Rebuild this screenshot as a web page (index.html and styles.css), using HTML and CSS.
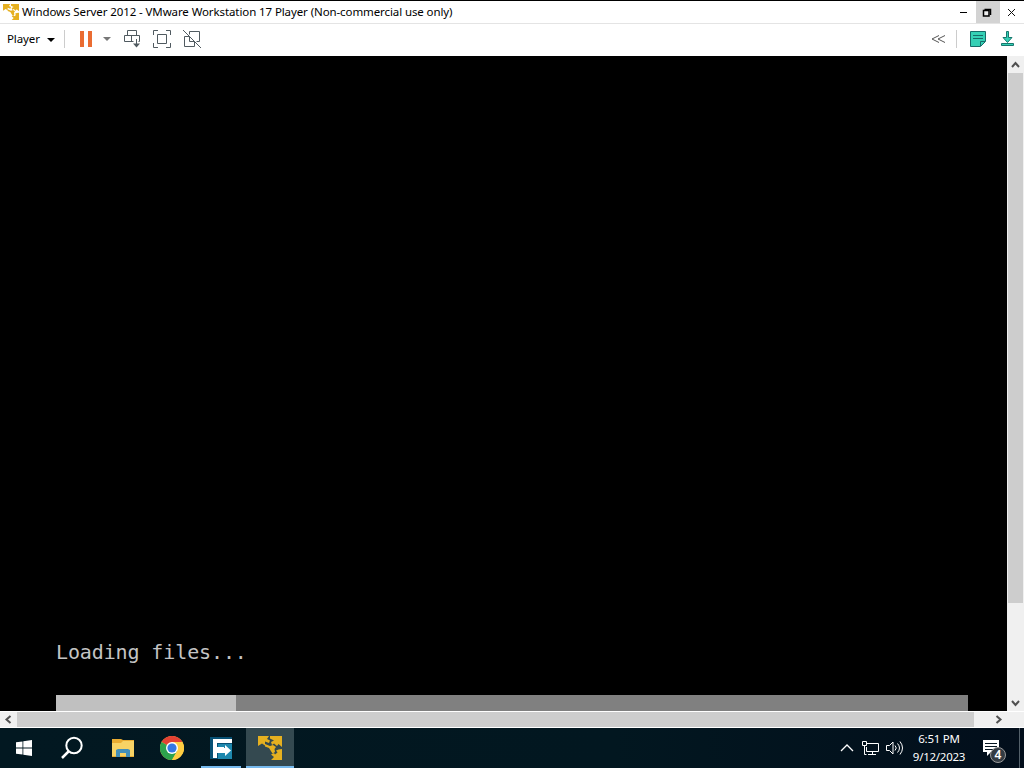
FILE: index.html
```
<!DOCTYPE html>
<html lang="en">

<head>
    <meta charset="UTF-8">
    <title>Windows Server 2012 - VMware Workstation 17 Player</title>
    <link rel="stylesheet" href="styles.css">
</head>

<body>
    <svg class="defs" width="0" height="0">
        <symbol id="vmware" viewBox="0 0 24 24">
            <path d="M0 0h11L9 3l3 1.500-1 2.500-4-1.500v4L4 7.500 0 10z" />
            <path d="M12 0h12v11l-3.500-3-1.500 2-3-2.500-2 1.500-1-3 3-1.500-4-2z" />
            <path d="M24 13v11H13l3-3-3-2.500 3-1.500 1 1.500 2.500-2-1.500-2 2.500-1z" />
            <path d="M7 8l5 2 3-1 3 2-1.500 2 .500 3-2.500 1.500-3.500-5.500-4-1.500z" />
        </symbol>
    </svg>

    <header class="title-bar">
        <svg class="app-icon" width="16" height="16"><use href="#vmware" /></svg>
        <span class="title">Windows Server 2012 - VMware Workstation 17 Player (Non-commercial use only)</span>
        <div class="window-buttons">
            <button><svg width="24" height="22"><path d="M8 11.5h7" stroke="#000" /></svg></button>
            <button class="restore"><svg width="24" height="22" fill="none" stroke="#000"><path d="M8.500 8.500h6v5.500" stroke-width="1.500" /><path d="M7.500 9.500h5.500v5.500h-5.500z" stroke-width="1.500" fill="#eee" /></svg></button>
            <button><svg width="24" height="22"><path d="M8 8l7 7M15 8l-7 7" stroke="#111" /></svg></button>
        </div>
    </header>

    <nav class="toolbar">
        <span class="player">Player</span>
        <i class="caret"></i>
        <i class="divider"></i>
        <div class="pause"></div>
        <i class="caret light"></i>
        <svg class="tool send" width="18" height="20" fill="none" stroke="#505a60">
            <path d="M3.500 6.500v-5h9v5M9.500 12.500h-9v-6h15v6h-1M7.500 6.500v6M12.500 10v7" />
            <path d="M9 14.500h7l-3.500 4z" fill="#505a60" stroke="none" />
        </svg>
        <svg class="tool full" width="18" height="18" fill="none" stroke="#505a60">
            <path d="M.500 5V.500H5M13 .500h4.500V5M17.500 13v4.500H13M5 17.500H.500V13M4.500 4.500h9v9h-9z" />
        </svg>
        <svg class="tool unity" width="18" height="18" fill="none" stroke="#505a60">
            <path d="M6.500 4.500v-3h10v10h-3M6.500 6.500h-5v10h10v-5M6.500 6.500v5h5M0 0l18 18" />
        </svg>
        <div class="tools-right">
            <svg class="collapse" width="14" height="8" fill="none" stroke="#555"><path d="M8 .500L1 4l7 3.500M14 .500L7 4l7 3.500" /></svg>
            <i class="divider"></i>
            <svg class="note" width="16" height="16" stroke="#176b68">
                <path d="M.500 .500h15v10l-5 5H.500z" fill="#35d0b5" />
                <path d="M3 4.500h10M3 7.500h10M10.500 15v-4.500H15" fill="none" />
            </svg>
            <svg class="download" width="14" height="16" stroke="#17776e" fill="#35d0b5">
                <path d="M5.500 .500h2v6h3.500l-4.500 5-4.500-5h3.500zM.500 12.500h12v2H.500z" />
            </svg>
        </div>
    </nav>

    <main class="viewport">
        <div class="screen">
            <p class="loading">Loading files...</p>
            <div class="progress"><div class="progress-done"></div></div>
        </div>
        <div class="scroll-y">
            <svg width="17" height="17"><path d="M5 11l3.500-4L12 11" /></svg>
            <div class="thumb"></div>
            <svg class="end" width="17" height="17"><path d="M5 7l3.500 4L12 7" /></svg>
        </div>
    </main>
    <div class="scroll-x">
        <svg width="17" height="17"><path d="M10.500 4l-4 3.500 4 3.500" /></svg>
        <div class="thumb"></div>
        <svg class="end" width="17" height="17"><path d="M6.500 4l4 3.500-4 3.500" /></svg>
    </div>

    <footer class="taskbar">
        <div class="task start">
            <svg width="16" height="16" fill="#fff"><path d="M0 2.300l6.500-.9v6.200H0zM7.300 1.300L16 0v7.600H7.300zM0 8.400h6.500v6.200L0 13.700zM7.300 8.400H16V16l-8.700-1.300z" /></svg>
        </div>
        <div class="task search">
            <svg width="24" height="24" fill="none" stroke="#fff" stroke-width="2"><circle cx="14" cy="9.500" r="7.700" /><path d="M8.500 15.500L2 22" stroke-width="2.500" /></svg>
        </div>
        <div class="task explorer">
            <svg width="22" height="20">
                <path d="M0 1h9l2 1h11v17H0z" fill="#e9ac32" />
                <path d="M0 5h9l2-2h11v15H0z" fill="#f8d365" />
                <path d="M4 19v-7l2-1h10l2 1v7h-4v-4H8v4z" fill="#438fb9" />
            </svg>
        </div>
        <div class="task chrome">
            <svg width="24" height="24">
                <circle cx="12" cy="12" r="12" fill="#ffcd42" />
                <path d="M12 12L1.600 6A12 12 0 0 1 22.400 6H12z" fill="#e34133" />
                <path d="M12 12L1.600 6A12 12 0 0 0 12 24l5.200-9z" fill="#2da34d" />
                <path d="M12 6h10.400A12 12 0 0 1 12 24l5.200-9z" fill="#ffcd42" />
                <circle cx="12" cy="12" r="6" fill="#fff" />
                <circle cx="12" cy="12" r="4.600" fill="#3478e5" />
            </svg>
        </div>
        <div class="task transfer">
            <svg width="24" height="24">
                <path d="M1 1h22v22H1z" fill="#075074" />
                <path d="M9 8h14v15H9z" fill="#1d87ad" />
                <path d="M4 3h19v4H8v4h7v3H8v8H4z" fill="#fff" />
                <path d="M8 12h8V9l6 5.500-6 5.500v-3H8z" fill="#fff" />
            </svg>
        </div>
        <div class="task active">
            <svg width="24" height="24"><use href="#vmware" /></svg>
        </div>
        <div class="tray">
            <svg class="chevron" width="14" height="8" fill="none" stroke="#fff" stroke-width="1.300"><path d="M1 7l6-6 6 6" /></svg>
            <svg class="network" width="17" height="15" fill="none" stroke="#fff"><path d="M5 2.500h11.500v8H4.500V6M10.500 10.500v3M6 13.500h8M.500 .500h4v4h-4zM2.500 4.500v9h2" /></svg>
            <svg class="volume" width="18" height="14" fill="none" stroke="#fff"><path d="M.500 4.500h3L7 1v12L3.500 9.500h-3zM9 4.500q2.500 2.500 0 5M11.500 2.500q4 4.500 0 9M14 .500q5 6.500 0 13" /></svg>
            <div class="clock"><span class="time">6:51 PM</span><span class="date">9/12/2023</span></div>
            <div class="notifications">
                <svg width="17" height="17"><path d="M0 0h16v12H8l-4 4v-4H0z" fill="#fff" /><path d="M2 3.500h12M2 6.500h12M2 9.500h8" stroke="#071722" /></svg>
                <span class="count">4</span>
            </div>
            <div class="show-desktop"></div>
        </div>
    </footer>
</body>

</html>
```
FILE: styles.css
```
* {
    margin: 0;
    padding: 0;
    box-sizing: border-box;
}

body {
    width: 1024px;
    height: 768px;
    overflow: hidden;
    display: flex;
    flex-direction: column;
    background: #000;
    font-family: "Noto Sans", sans-serif;
    font-size: 12px;
    color: #000;
}

svg {
    display: block;
    flex: none;
}

.defs {
    position: absolute;
}

#vmware {
    fill: #e6b020;
}

/* Window chrome */
.title-bar {
    height: 24px;
    flex: none;
    display: flex;
    align-items: center;
    background: #fff;
    border-top: 1px solid #000;
    border-bottom: 1px solid #e4e4e4;
}

.app-icon {
    margin: 0 3px;
}

.title {
    padding-bottom: 2px;
    font-size: 11.5px;
    letter-spacing: -0.1px;
    white-space: nowrap;
}

.window-buttons {
    display: flex;
    margin-left: auto;
}

.window-buttons button {
    width: 24px;
    height: 22px;
    border: 0;
    background: #fff;
}

.window-buttons .restore {
    background: #d3d3d3;
}

.toolbar {
    height: 32px;
    flex: none;
    display: flex;
    align-items: center;
    padding-left: 7px;
    padding-bottom: 2px;
    background: #fff;
}

.player {
    width: 33px;
    padding-bottom: 2px;
    font-size: 11.5px;
    letter-spacing: -0.1px;
}

.caret {
    margin: 2px 9px 0 7px;
    border: 4px solid transparent;
    border-top-color: #000;
    border-bottom: 0;
}

.caret.light {
    margin: 0 13px 0 11px;
    border-top-color: #777;
}

.divider {
    width: 1px;
    height: 18px;
    background: #ccc;
}

.pause {
    width: 12px;
    height: 16px;
    margin-left: 15px;
    border: solid #ea6c32;
    border-width: 0 4px;
}

.send {
    margin-right: 11px;
}

.full {
    margin-right: 12px;
}

.tools-right {
    display: flex;
    align-items: center;
    margin-left: auto;
}

.collapse {
    margin-right: 10px;
}

.note {
    margin: 0 15px 0 13px;
}

.download {
    margin-right: 9px;
}

.tools-right .divider {
    margin-left: 1px;
}

/* Virtual machine */
.viewport {
    height: 655px;
    flex: none;
    display: flex;
}

.screen {
    width: 1007px;
    padding: 584px 39px 0 56px;
    background: #000;
}

.loading {
    height: 24px;
    font-family: "DejaVu Sans Mono", monospace;
    font-size: 20px;
    line-height: 24px;
    letter-spacing: -0.12px;
    color: #c4c4c4;
}

.progress {
    height: 16px;
    margin-top: 31px;
    background: #808080;
}

.progress-done {
    width: 180px;
    height: 16px;
    background: #c0c0c0;
}

.scroll-y,
.scroll-x {
    display: flex;
    background: #f0f0f0;
    fill: none;
    stroke: #505050;
    stroke-width: 2;
}

.scroll-y {
    width: 17px;
    flex-direction: column;
}

.scroll-y .thumb {
    height: 530px;
    margin: 0 1px;
    background: #cdcdcd;
}

.scroll-y .end {
    margin-top: auto;
}

.scroll-x {
    height: 17px;
    flex: none;
    border-top: 1px solid #fff;
    border-bottom: 1px solid #fff;
}

.scroll-x .thumb {
    width: 957px;
    background: #cdcdcd;
}

.scroll-x .end {
    margin: 0 17px 0 auto;
}

/* Taskbar */
.taskbar {
    height: 40px;
    flex: none;
    display: flex;
    background: linear-gradient(90deg, #021821, #021720 60%, #020e1b);
    color: #fff;
}

.task {
    height: 40px;
    display: flex;
    align-items: center;
    justify-content: center;
}

.start {
    width: 48px;
}

.search {
    width: 48px;
}

.explorer {
    width: 52px;
    padding-left: 1px;
}

.chrome {
    width: 48px;
}

.transfer {
    width: 40px;
    margin: 0 5px;
    border-bottom: 2px solid #76b9ed;
    padding-top: 2px;
}

.active {
    width: 48px;
    background: #344950;
    border-bottom: 2px solid #76b9ed;
    padding-top: 2px;
}

.tray {
    display: flex;
    align-items: center;
    margin-left: auto;
}

.network {
    margin: 0 7px 0 8px;
}

.clock {
    display: flex;
    flex-direction: column;
    align-items: center;
    width: 54px;
    margin: 0 17px 0 8px;
    line-height: 18px;
    font-size: 11.5px;
    letter-spacing: -0.25px;
    padding-bottom: 1px;
}

.notifications {
    position: relative;
    width: 24px;
    height: 17px;
}

.count {
    position: absolute;
    left: 7px;
    top: 7px;
    width: 16px;
    height: 16px;
    border: 1px solid #999;
    border-radius: 50%;
    background: #333b43;
    font-weight: 600;
    line-height: 14px;
    text-align: center;
}

.show-desktop {
    width: 5px;
    height: 40px;
    margin-left: 12px;
    border-left: 1px solid #53606a;
}
```
